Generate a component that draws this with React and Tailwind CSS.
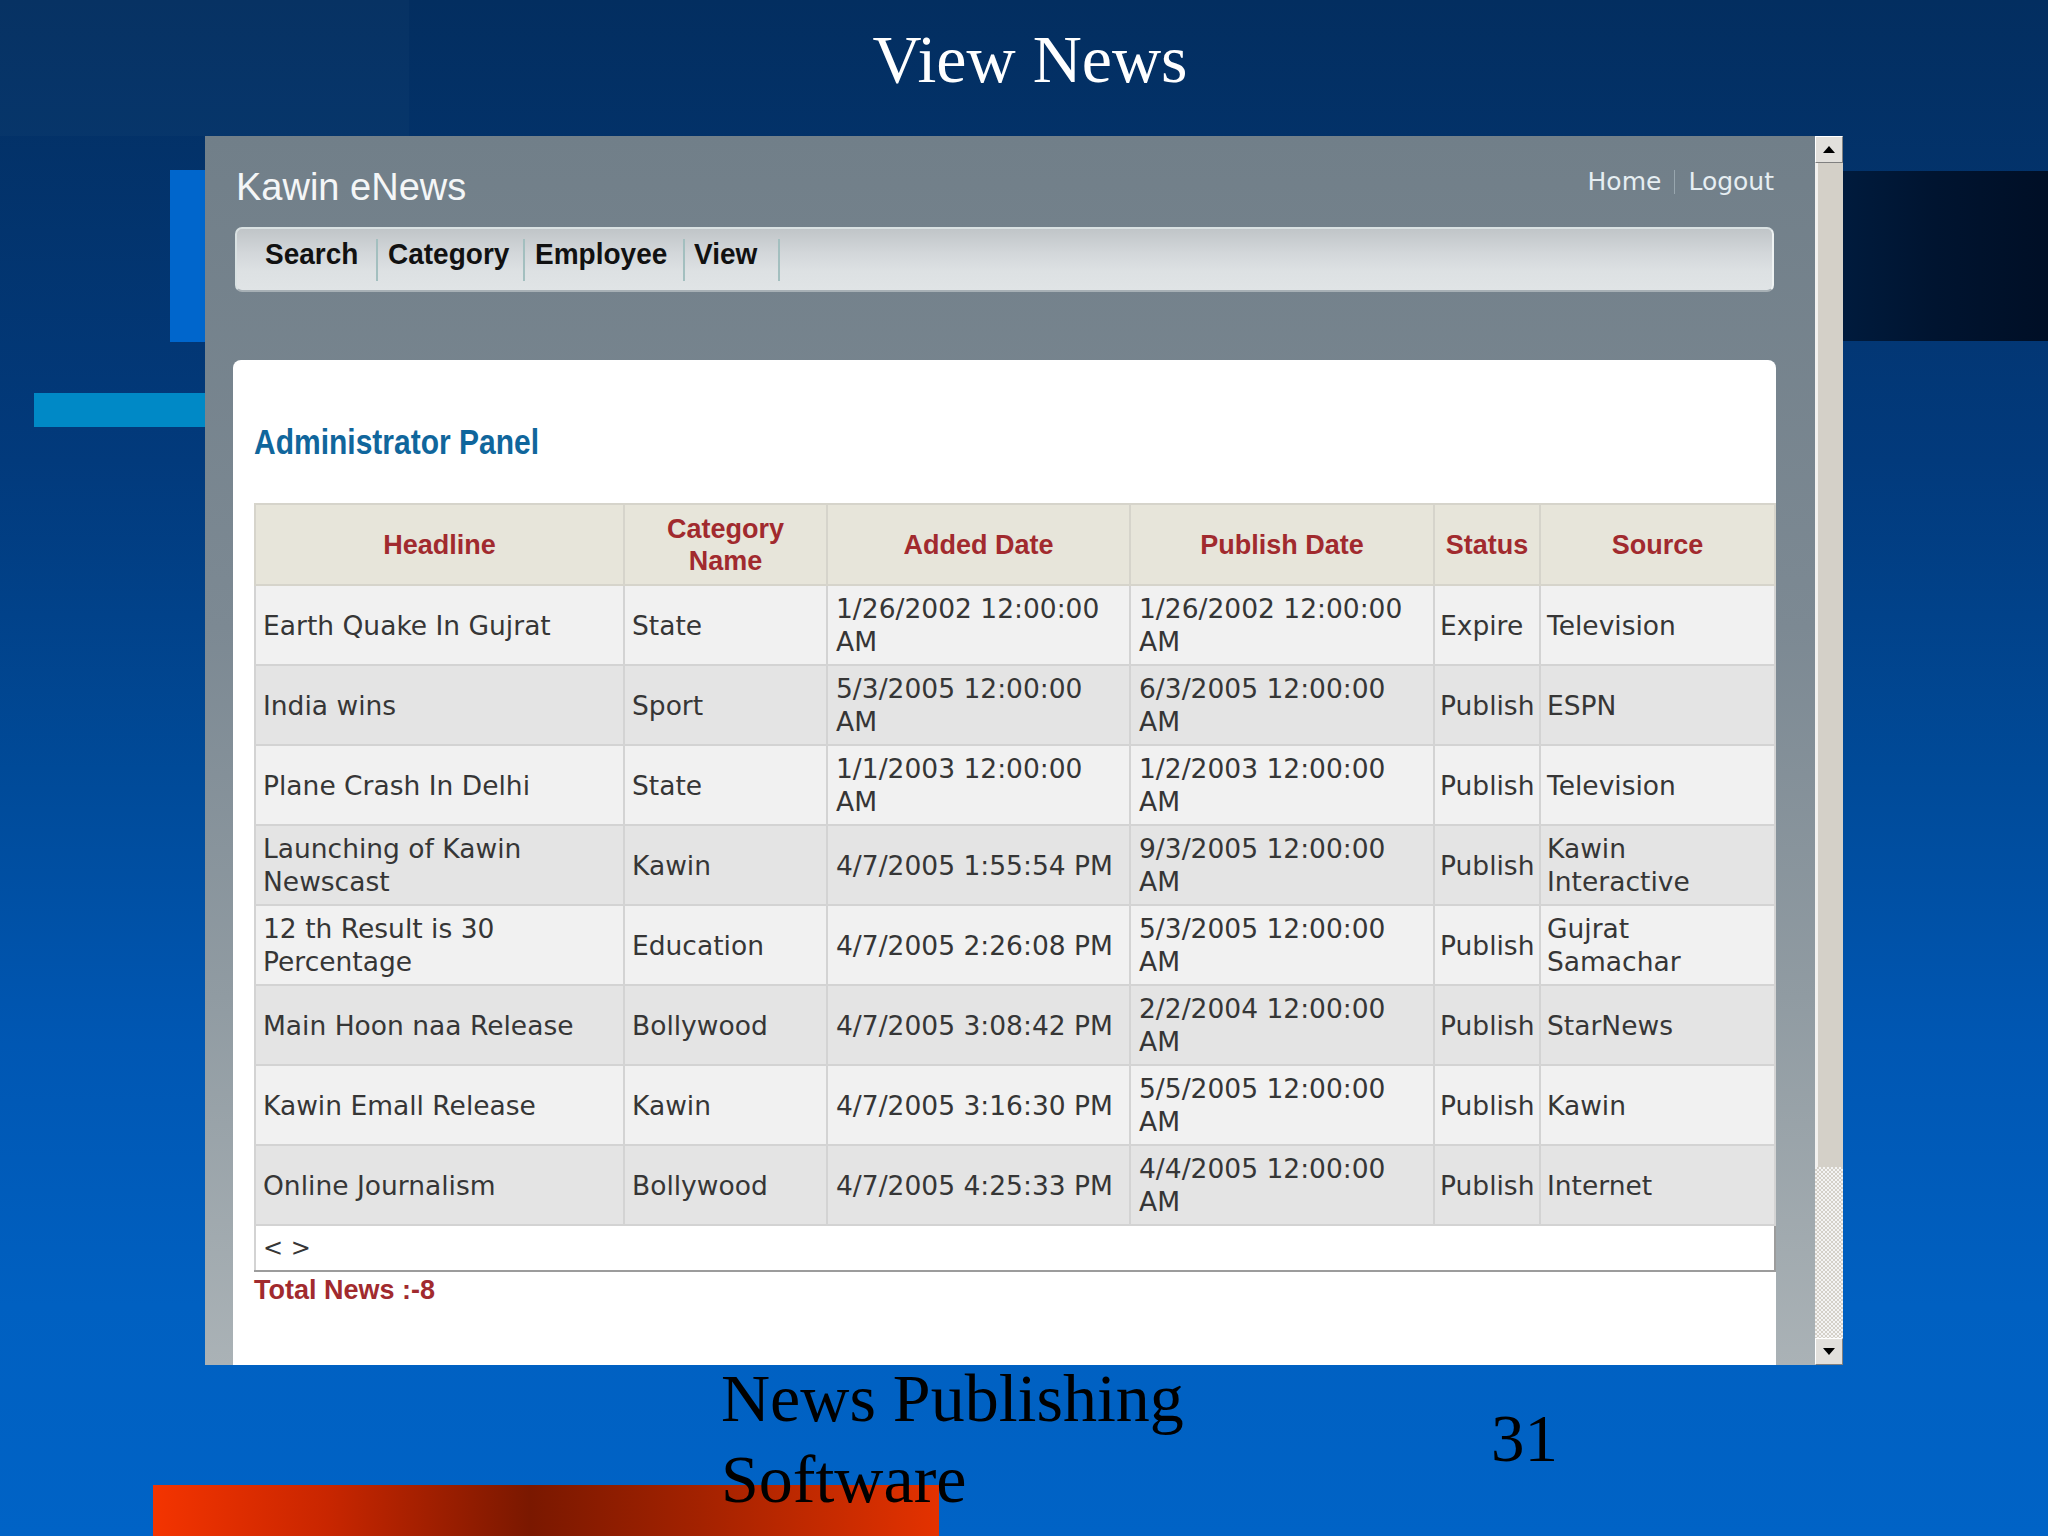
import React from "react";

const rows = [
  { h: ["Earth Quake In Gujrat"], c: ["State"], a: ["1/26/2002 12:00:00", "AM"], p: ["1/26/2002 12:00:00", "AM"], s: "Expire", src: ["Television"] },
  { h: ["India wins"], c: ["Sport"], a: ["5/3/2005 12:00:00", "AM"], p: ["6/3/2005 12:00:00", "AM"], s: "Publish", src: ["ESPN"] },
  { h: ["Plane Crash In Delhi"], c: ["State"], a: ["1/1/2003 12:00:00", "AM"], p: ["1/2/2003 12:00:00", "AM"], s: "Publish", src: ["Television"] },
  { h: ["Launching of Kawin", "Newscast"], c: ["Kawin"], a: ["4/7/2005 1:55:54 PM"], p: ["9/3/2005 12:00:00", "AM"], s: "Publish", src: ["Kawin", "Interactive"] },
  { h: ["12 th Result is 30", "Percentage"], c: ["Education"], a: ["4/7/2005 2:26:08 PM"], p: ["5/3/2005 12:00:00", "AM"], s: "Publish", src: ["Gujrat", "Samachar"] },
  { h: ["Main Hoon naa Release"], c: ["Bollywood"], a: ["4/7/2005 3:08:42 PM"], p: ["2/2/2004 12:00:00", "AM"], s: "Publish", src: ["StarNews"] },
  { h: ["Kawin Emall Release"], c: ["Kawin"], a: ["4/7/2005 3:16:30 PM"], p: ["5/5/2005 12:00:00", "AM"], s: "Publish", src: ["Kawin"] },
  { h: ["Online Journalism"], c: ["Bollywood"], a: ["4/7/2005 4:25:33 PM"], p: ["4/4/2005 12:00:00", "AM"], s: "Publish", src: ["Internet"] },
];

const navItems = [
  { label: "Search", cls: "w-[113px] pl-0" },
  { label: "Category", cls: "w-[147px] pl-[10px]" },
  { label: "Employee", cls: "w-[160px] pl-[10px]" },
  { label: "View", cls: "w-[95px] pl-[9px]" },
];

function Cell({ lines, pad = "pl-[7px]" }) {
  return (
    <td className={`border-2 border-[#d3d3d3] ${pad} pr-[2px] align-middle`}>
      {lines.map((l) => (
        <div key={l} className="whitespace-nowrap">
          {l}
        </div>
      ))}
    </td>
  );
}

function Th({ children }) {
  return (
    <th className="border-2 border-[#d6d4cb] bg-[#e7e5da] text-center align-middle font-bold">
      {children}
    </th>
  );
}

function ScrollButton({ down }) {
  return (
    <div className="flex h-[27px] items-center justify-center border border-t-white border-l-white border-r-[#808080] border-b-[#808080] bg-[#e2e0dc]">
      <svg width="12" height="7" viewBox="0 0 12 7">
        {down ? <path d="M0 0 L12 0 L6 7 Z" fill="#000" /> : <path d="M6 0 L12 7 L0 7 Z" fill="#000" />}
      </svg>
    </div>
  );
}

export default function App() {
  return (
    <div className="relative h-[1536px] w-[2048px] overflow-hidden bg-[linear-gradient(180deg,#032e60_0%,#023a7c_30%,#004a98_50%,#0057b3_68%,#0060c1_85%,#0063c6_100%)]">
      {/* decorative slide shapes */}
      <div className="absolute left-0 top-0 h-[136px] w-[409px] bg-white/[0.02]" />
      <div className="absolute left-[170px] top-[170px] h-[172px] w-[50px] bg-[#0066cc]" />
      <div className="absolute left-[34px] top-[393px] h-[34px] w-[180px] bg-[#0089c6]" />
      <div className="absolute left-[1843px] top-[171px] h-[170px] w-[205px] bg-[linear-gradient(90deg,#001b3d_0%,#001430_45%,#000f26_100%)]" />
      <div className="absolute left-[153px] top-[1485px] h-[51px] w-[786px] bg-[linear-gradient(90deg,#f43400_0%,#c92600_22%,#7a1800_48%,#a42200_70%,#e43200_100%)]" />

      <div className="relative z-10 flex flex-col">
        {/* slide title */}
        <div className="h-[136px] pl-[12px] pt-[25px] text-center font-['Liberation_Serif','Times_New_Roman',serif] text-[68px] leading-[68px] text-white">
          View News
        </div>

        {/* browser panel */}
        <div className="ml-[205px] flex h-[1229px] w-[1638px]">
          <div className="flex w-[1610px] flex-col bg-[linear-gradient(180deg,#717f89_0%,#7c8993_40%,#909ba2_70%,#aab2b6_100%)] pl-[28px]">
            {/* header */}
            <div className="flex w-[1541px] items-start justify-between pt-[29px]">
              <div className="ml-[3px] font-['Liberation_Sans',Arial,sans-serif] text-[38px] leading-[44px] text-[#f4f6f7]">
                Kawin eNews
              </div>
              <div className="flex items-center font-['DejaVu_Sans',sans-serif] text-[25px] leading-[34px] text-[#e6eef2]">
                <span>Home</span>
                <span className="mx-[13px] h-[24px] w-px bg-[#98a6ae]" />
                <span>Logout</span>
              </div>
            </div>

            {/* nav bar */}
            <div className="ml-[2px] mt-[18px] flex h-[65px] w-[1539px] items-center rounded-[7px] border-2 border-[#d9e1e2] border-b-[#a7b0b5] border-r-[#eef2f2] bg-[linear-gradient(180deg,#c0c5c8_0%,#d3d7da_40%,#dde1e3_70%,#e0e4e6_100%)] pl-[28px] font-['Liberation_Sans',Arial,sans-serif] text-[28px] font-bold text-[#111]">
              {navItems.map((n) => (
                <div key={n.label} className={`flex h-[42px] items-center border-r-2 border-[#a3bfbf] ${n.cls}`}>
                  <span className="mb-[7px] inline-block origin-bottom scale-y-[1.08]">{n.label}</span>
                </div>
              ))}
            </div>

            {/* content card */}
            <div className="mt-[68px] flex w-[1543px] flex-1 flex-col rounded-t-[8px] bg-white pl-[21px] pr-[2px] pt-[67px]">
              <div className="font-['Liberation_Sans',Arial,sans-serif] text-[30px] font-bold leading-[36px] text-[#10669c]">
                <span className="inline-block origin-bottom scale-y-[1.16]">Administrator Panel</span>
              </div>

              <table className="mt-[40px] w-[1520px] table-fixed border-collapse font-['DejaVu_Sans',sans-serif] text-[26.5px] leading-[33px] text-[#363636]">
                <colgroup>
                  <col className="w-[369px]" />
                  <col className="w-[203px]" />
                  <col className="w-[303px]" />
                  <col className="w-[304px]" />
                  <col className="w-[106px]" />
                  <col className="w-[235px]" />
                </colgroup>
                <thead>
                  <tr className="h-[81px] font-['Liberation_Sans',Arial,sans-serif] text-[27px] leading-[32px] text-[#a12a2e]">
                    <Th>Headline</Th>
                    <Th>
                      Category
                      <br />
                      Name
                    </Th>
                    <Th>Added Date</Th>
                    <Th>Publish Date</Th>
                    <Th>Status</Th>
                    <Th>Source</Th>
                  </tr>
                </thead>
                <tbody>
                  {rows.map((r, i) => (
                    <tr key={r.h[0]} className={`h-[80px] ${i % 2 === 0 ? "bg-[#f1f1f1]" : "bg-[#e4e4e4]"}`}>
                      <Cell lines={r.h} />
                      <Cell lines={r.c} />
                      <Cell lines={r.a} pad="pl-[8px]" />
                      <Cell lines={r.p} pad="pl-[8px]" />
                      <Cell lines={[r.s]} pad="pl-[5px]" />
                      <Cell lines={r.src} pad="pl-[6px]" />
                    </tr>
                  ))}
                  <tr className="h-[46px] bg-white">
                    <td colSpan={6} className="border-2 border-[#d3d3d3] border-b-[#9c9c9c] border-r-[#9c9c9c] pl-[7px] align-middle text-[24px]">
                      &lt; &gt;
                    </td>
                  </tr>
                </tbody>
              </table>

              <div className="mt-[2px] font-['Liberation_Sans',Arial,sans-serif] text-[27px] font-bold leading-[32px] text-[#a12a2e]">
                Total News :-8
              </div>
            </div>
          </div>

          {/* scrollbar */}
          <div className="flex w-[28px] flex-col bg-[#d4d0c8]">
            <ScrollButton />
            <div className="h-[1004px] border-l-[3px] border-white/70 bg-[#d4d0c8]" />
            <div className="flex-1 bg-[repeating-conic-gradient(#d4d0c8_0_25%,#f4f4f4_0_50%)] bg-[length:4px_4px]" />
            <ScrollButton down />
          </div>
        </div>

        {/* footer */}
        <div className="mt-[-7px] flex pl-[721px] font-['Liberation_Serif','Times_New_Roman',serif] text-black">
          <div className="w-[770px] text-[68px] leading-[81px]">
            News Publishing
            <br />
            Software
          </div>
          <div className="mt-[40px] text-[67px] leading-[81px]">31</div>
        </div>
      </div>
    </div>
  );
}
